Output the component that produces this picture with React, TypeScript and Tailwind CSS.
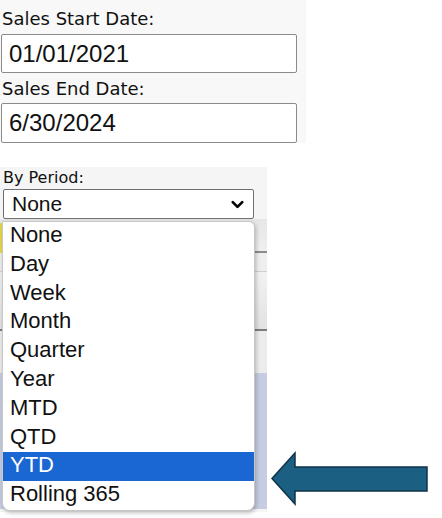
import { ChevronDown } from 'lucide-react';

const periods = ['None', 'Day', 'Week', 'Month', 'Quarter', 'Year', 'MTD', 'QTD', 'YTD', 'Rolling 365'];

const labelFont = { fontFamily: '"DejaVu Sans", Verdana, sans-serif' };

export default function App() {
  return (
    <div className="relative w-[442px] h-[518px] bg-white text-[#111] overflow-hidden" style={{ fontFamily: '"Liberation Sans", Arial, sans-serif' }}>
      {/* 日期区域 */}
      <div className="w-[306px] h-[143px] bg-[#f8f8f8] pt-[8px]">
        <div className="pl-[2px] text-[18px] leading-[22px]" style={labelFont}>Sales Start Date:</div>
        <div className="ml-[1px] mt-[4px] w-[296px] h-[39px] border border-[#8a8a8a] rounded-[2px] bg-white pl-[7px] flex items-center text-[24px]">
          01/01/2021
        </div>
        <div className="pl-[2px] mt-[5px] text-[18px] leading-[22px]" style={labelFont}>Sales End Date:</div>
        <div className="ml-[1px] mt-[3px] w-[296px] h-[40px] border border-[#8a8a8a] rounded-[2px] bg-white pl-[7px] flex items-center text-[24px]">
          6/30/2024
        </div>
      </div>

      {/* 周期下拉 */}
      <div className="relative mt-[24px] w-[267px] h-[345px] bg-[#f5f5f5]">
        <div className="pl-[3px] pt-[1px] text-[16px] leading-[20px]" style={labelFont}>By Period:</div>
        <div className="ml-[3px] mt-[1px] w-[251px] h-[30px] border border-[#707070] rounded-[2px] bg-white pl-[8px] pr-[6px] flex items-center justify-between text-[21px]">
          <span>None</span>
          <ChevronDown size={19} strokeWidth={3.4} className="text-black" />
        </div>

        {/* 背后的表格 */}
        <div className="flex flex-col">
          <div className="h-[34px] bg-gradient-to-b from-[#e6e6e6] to-[#efefef] border-b-2 border-[#8c8c8c]" />
          <div className="h-[19px] bg-[#eeeeee] border-b border-[#cfcfcf]" />
          <div className="h-[59px] bg-gradient-to-b from-[#f2f2f2] to-[#e2e2e2] border-b-2 border-[#7c7c7c]" />
          <div className="h-[42px] bg-[#ececec]" />
          <div className="h-[136px] bg-[#c6cde2]" />
        </div>
        <div className="absolute left-0 top-[56px] w-[3px] h-[30px] bg-[#e8d84a]" />

        {/* 弹出列表 */}
        <div className="absolute left-[2px] top-[54px] w-[253px] bg-white border border-[#c8c8c8] rounded-b-[8px] rounded-tr-[6px] shadow-[1px_2px_4px_rgba(0,0,0,0.25)] overflow-hidden text-[22px]">
          {periods.map((p) => (
            <div
              key={p}
              className={`h-[28.8px] leading-[25px] pl-[7px] ${p === 'YTD' ? 'bg-[#1a66d2] text-white' : ''}`}
            >
              {p}
            </div>
          ))}
        </div>
      </div>

      {/* 箭头 */}
      <svg className="absolute left-[270px] top-[451px]" width="160" height="55" viewBox="0 0 160 55">
        <path
          d="M2 27.5 L25 2 L25 16 L157 16 L157 40 L25 40 L25 53 Z"
          fill="#1b5f82"
          stroke="#0f3448"
          strokeWidth="1.5"
          strokeLinejoin="miter"
        />
      </svg>
    </div>
  );
}
